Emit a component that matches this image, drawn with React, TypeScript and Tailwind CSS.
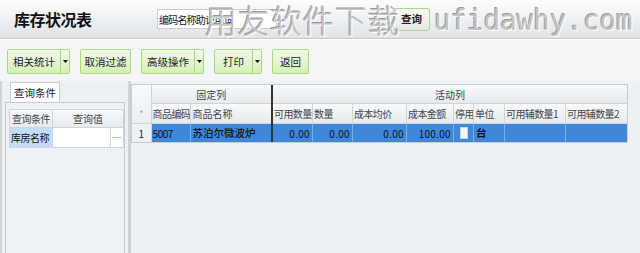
import React from "react";

const F = { fontFamily: '"Noto Sans CJK SC", "Liberation Sans", sans-serif' };

function GBtn({ label, w, dd }: { label: string; w: number; dd?: boolean }) {
  return (
    <div
      className="flex h-[25px] items-stretch rounded-[2px] border border-[#a6dc78] bg-gradient-to-b from-[#f3fbe9] to-[#d6efb8] text-[10.5px] text-[#222]"
      style={{ width: w }}
    >
      <div className="flex flex-1 items-center justify-center whitespace-nowrap">{label}</div>
      {dd && (
        <div className="flex w-[9px] items-center justify-center border-l border-[#a6dc78]">
          <svg width="5" height="3" viewBox="0 0 5 3">
            <path d="M0 0h5L2.5 3z" fill="#111" />
          </svg>
        </div>
      )}
    </div>
  );
}

const cols = [
  { t: "可用数量", w: 40, v: "0.00" },
  { t: "数量", w: 40, v: "0.00" },
  { t: "成本均价", w: 54, v: "0.00" },
  { t: "成本金额", w: 47, v: "100.00" },
  { t: "停用", w: 20, v: "chk" },
  { t: "单位", w: 31, v: "台" },
  { t: "可用辅数量1", w: 61, v: "" },
  { t: "可用辅数量2", w: 61, v: "" },
];

const hdr = "bg-gradient-to-b from-[#f8f9fa] to-[#e6eaee] text-[#444]";

export default function App() {
  return (
    <div className="relative h-[253px] w-[640px] overflow-hidden bg-[#edf1f4] text-[10px] text-[#222]" style={F}>
      {/* header */}
      <div className="flex h-[38px] items-center bg-gradient-to-b from-[#fdfdfd] to-[#dfe4e8] pl-[14px]">
        <div className="w-[143px] shrink-0 text-[16px] font-bold tracking-[-0.5px] text-[#111]">库存状况表</div>
        <div className="flex h-[20px] w-[120px] shrink-0 items-center overflow-hidden whitespace-nowrap border border-[#c9ccd0] bg-white pl-[1px] text-[10px] tracking-[-0.8px] text-[#111]">
          编码名称助记用词
        </div>
        <div className="ml-[116px] flex h-[23px] w-[37px] shrink-0 items-center justify-center rounded-[3px] border border-[#a8d987] bg-gradient-to-b from-[#fafafa] to-[#e6e6e6] text-[10.5px] font-bold text-[#222]">
          查询
        </div>
      </div>
      <div className="h-[1px] bg-[#c4cacf]" />
      <div className="h-[1px] bg-white" />

      {/* toolbar */}
      <div className="flex h-[41px] items-start gap-[10px] bg-[#f3f5f7] pl-[7px] pt-[9px]">
        <GBtn label="相关统计" w={63} dd />
        <GBtn label="取消过滤" w={51} />
        <GBtn label="高级操作" w={63} dd />
        <GBtn label="打印" w={48} dd />
        <GBtn label="返回" w={37} />
      </div>

      {/* main */}
      <div className="flex h-[173px] whitespace-nowrap">
        {/* left */}
        <div className="flex w-[130px] border-l-2 border-[#cfd3d7] pl-[3px]">
          <div className="flex w-[121px] flex-col">
            <div className="flex h-[21px] items-end pl-[5px]">
              <div className="flex h-[20px] w-[50px] items-center justify-center border border-b-0 border-[#c5cad0] bg-white text-[10.5px]">
                查询条件
              </div>
            </div>
            <div className="flex-1 border border-[#c5cad0] bg-[#eef2f5] pl-[3px] pt-[6px]">
              <div className={`flex h-[19px] border border-[#d0d4d8] ${hdr}`}>
                <div className="flex w-[43px] items-center justify-center overflow-hidden border-r border-[#d0d4d8] tracking-[-0.5px]">查询条件</div>
                <div className="flex flex-1 items-center justify-center">查询值</div>
              </div>
              <div className="flex h-[20px] border border-t-0 border-[#d0d4d8] bg-white">
                <div className="flex w-[43px] items-center overflow-hidden bg-[#c3dcf7] pl-[1px] tracking-[-0.5px] text-[#111]">库房名称</div>
                <div className="flex-1" />
                <div className="flex w-[13px] items-center justify-center border-l border-[#d0d4d8] text-[9px] text-[#333]">…</div>
              </div>
            </div>
          </div>
          <div className="ml-[3px] w-[2px] bg-[#cfd3d7]" />
        </div>

        {/* grid */}
        <div className="flex-1 border-l border-[#c8cdd2] pt-[3px]">
          <div className="w-[497px] border border-[#c8cdd2] bg-white">
            <div className="flex">
              <div className={`flex w-[20px] flex-col border-r border-[#d0d4d8] ${hdr}`}>
                <div className="h-[19px]" />
                <div className="flex h-[19px] items-center justify-center text-[9px] text-[#aaa]">*</div>
                <div className="flex h-[19px] items-center justify-center border-t border-[#d0d4d8] bg-[#eef1f3] text-[#222]">1</div>
              </div>
              <div className="flex w-[122px] flex-col">
                <div className={`flex h-[19px] items-center justify-center border-b border-[#d0d4d8] ${hdr}`}>固定列</div>
                <div className={`flex h-[19px] ${hdr}`}>
                  <div className="flex w-[39px] items-center overflow-hidden border-r border-[#d0d4d8] pl-[1px] tracking-[-0.6px]">商品编码</div>
                  <div className="flex flex-1 items-center pl-[2px]">商品名称</div>
                </div>
                <div className="flex h-[19px] border-t border-[#d0d4d8] bg-[#3f88d9] text-[#111]">
                  <div className="flex w-[39px] items-center border-r border-[#7aaee6] pl-[1px] tracking-[-0.5px]">5007</div>
                  <div className="flex flex-1 items-center pl-[2px] text-[10.5px] font-medium">苏泊尔微波炉</div>
                </div>
              </div>
              <div className="w-[2px] bg-[#333]" />
              <div className="flex flex-1 flex-col">
                <div className={`flex h-[19px] items-center justify-center border-b border-[#d0d4d8] ${hdr}`}>活动列</div>
                <div className={`flex h-[19px] ${hdr}`}>
                  {cols.map((c, i) => (
                    <div key={i} className="flex items-center overflow-hidden border-r border-[#d0d4d8] pl-[1px] tracking-[-0.6px] last:border-r-0" style={{ width: c.w }}>
                      {c.t}
                    </div>
                  ))}
                </div>
                <div className="flex h-[19px] border-t border-[#d0d4d8] bg-[#3f88d9] text-[#111]">
                  {cols.map((c, i) => (
                    <div
                      key={i}
                      className="flex items-center border-r border-[#7aaee6] last:border-r-0"
                      style={{ width: c.w, justifyContent: c.v === "chk" ? "center" : c.v === "台" ? "flex-start" : "flex-end", paddingRight: c.v === "chk" ? 0 : 2, paddingLeft: 2 }}
                    >
                      {c.v === "chk" ? (
                        <div className="h-[12px] w-[8px] border border-[#c7d3e0] bg-[#f4f6f8]" />
                      ) : c.v === "台" ? (
                        <span className="text-[10.5px] font-bold">台</span>
                      ) : (
                        <span className="tracking-[0.3px]">{c.v}</span>
                      )}
                    </div>
                  ))}
                </div>
              </div>
            </div>
          </div>
        </div>
      </div>

      {/* watermark */}
      <div
        className="pointer-events-none absolute left-[205px] top-[-3px] whitespace-nowrap text-[32px] font-light leading-[44px] tracking-[0.5px] text-[#c4c4c4]"
        style={{ fontFamily: '"Noto Sans CJK SC", sans-serif', textShadow: "1px 1px 0 #fff, -1px -1px 0 #9a9a9a" }}
      >
        用友软件下载
      </div>
      <div
        className="pointer-events-none absolute left-[434px] top-[0px] whitespace-nowrap text-[27.5px] leading-[40px] text-[#c4c4c4]"
        style={{ fontFamily: '"DejaVu Sans Mono", monospace', textShadow: "1px 1px 0 #fff, -1px -1px 0 #9a9a9a" }}
      >
        ufidawhy.com
      </div>
    </div>
  );
}
